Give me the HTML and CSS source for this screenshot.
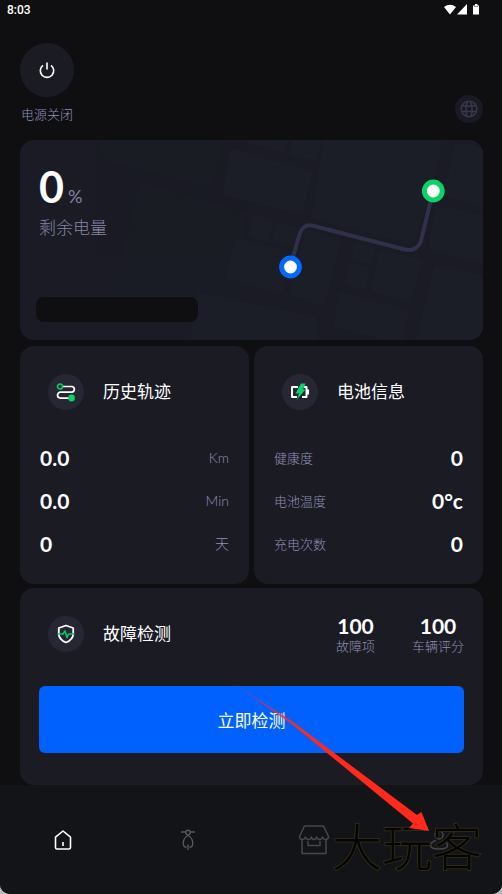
FILE: index.html
```html
<!DOCTYPE html>
<html lang="zh-CN">
<head>
<meta charset="utf-8">
<meta name="viewport" content="width=device-width, initial-scale=1">
<title>车辆首页</title>
<link rel="stylesheet" href="styles.css">
</head>
<body>
<div class="app">
  <div class="status">
    <span>8:03</span>
    <svg class="status-icons" width="38" height="12" viewBox="0 0 38 12" fill="#fff" aria-hidden="true">
      <path d="M0 3Q6-1.500 12 3L6 10.500Z"/><path d="M23 0V10.500H13Z"/><path d="M29 1.500H31V0H33.500V1.500H35V10.500H29Z"/><path d="M30 2.500H34" stroke="#777" stroke-width=".8"/>
    </svg>
  </div>

  <header class="top">
    <div class="power">
      <button class="power-btn" aria-label="电源">
        <svg width="18" height="18" viewBox="0 0 18 18" fill="none" stroke="#fff" stroke-width="1.6" aria-hidden="true"><path d="M9 1.500V8.500M5 4.300a6.700 6.700 0 1 0 8 0"/></svg>
      </button>
      <span class="label">电源关闭</span>
    </div>
    <button class="globe" aria-label="语言">
      <svg width="18" height="18" viewBox="0 0 18 18" fill="none" stroke="#38384a" stroke-width="1.5" aria-hidden="true"><circle cx="9" cy="9" r="7.800"/><path d="M7.500 1.500Q4.500 9 7 16.500M10.500 1.500Q13.500 9 11 16.500M2 5.500Q9 7 16 5.500M1.500 11.500H16.500"/></svg>
    </button>
  </header>

  <main class="cards">
    <section class="card map-card">
      <svg class="map" viewBox="0 0 463 200" preserveAspectRatio="xMaxYMid slice" aria-hidden="true">
        <g class="blocks faint">
          <path d="M122 46L224 75L200 176L98 148Z"/><path d="M90 -10L200 -10L190 44L80 16Z"/>
        </g>
        <g class="blocks">
          <path d="M180 156L294 180V210H172Z"/>
          <path d="M213 13L289 33L280 71L206 52Z"/>
          <path d="M226 -8H267L263 9L232 1Z"/>
          <path d="M277 -8H300L294 17L273 12Z"/>
          <path d="M309 -10L419 -5L417 14L392 101L295 75Z"/>
          <path d="M236 79L250 83L246 98L232 94Z"/>
          <path d="M259 86L274 90L271 102L256 98Z"/>
          <path d="M218 102L266 115L260 149L209 136Z"/>
          <path d="M288 94L318 102L302 162L272 152Z"/>
          <path d="M337 107L352 111L349 121L335 117Z"/>
          <path d="M332 127L346 130L343 146L328 141Z"/>
          <path d="M362 114L399 122L388 159L354 149Z"/>
          <path d="M322 156L385 173L378 200L317 184Z"/>
          <path d="M418 69L475 81V123L412 107Z"/>
          <path d="M437 6L475 14V66L428 54Z"/>
          <path d="M417 129L475 142V210H398Z"/>
        </g>
        <path class="route" d="M270 127L280 93Q284 83 294 86L383 109Q396 113 401 101L413 51"/>
        <circle cx="270.500" cy="127" r="8.900" fill="#fff" stroke="#0568ff" stroke-width="5"/>
        <circle cx="413.300" cy="51" r="8.900" fill="#fff" stroke="#08d467" stroke-width="5"/>
      </svg>
      <div class="charge">
        <p class="charge-value"><strong>0</strong><span>%</span></p>
        <p class="charge-label">剩余电量</p>
      </div>
      <div class="pill"></div>
    </section>

    <div class="pair">
      <section class="card info">
        <div class="head">
          <span class="badge"><svg width="22" height="22" viewBox="0 0 22 22" fill="none" stroke-width="1.700" aria-hidden="true"><path stroke="#fff" d="M7 5.500H16.500a2.800 2.800 0 0 1 0 5.600H5.500a3 3 0 0 0 0 6H14"/><circle cx="5" cy="5.500" r="2.500" stroke="#08c964"/><circle cx="16.500" cy="17" r="3.400" fill="#08d467"/></svg></span>
          <h2>历史轨迹</h2>
        </div>
        <dl class="rows value-first">
          <div><dt>Km</dt><dd>0.0</dd></div>
          <div><dt>Min</dt><dd>0.0</dd></div>
          <div><dt>天</dt><dd>0</dd></div>
        </dl>
      </section>
      <section class="card info">
        <div class="head">
          <span class="badge"><svg width="22" height="22" viewBox="0 0 22 22" fill="none" aria-hidden="true"><path stroke="#fff" stroke-width="2" stroke-linejoin="round" d="M9 6H3V16H8M13 16H17.500V6H15"/><path stroke="#fff" stroke-width="2" d="M19 8.500V13.500"/><path fill="#08d467" d="M12 2.500H16.500L14 8.500H16.500L7.500 19L10 12.500H6.500Z"/></svg></span>
          <h2>电池信息</h2>
        </div>
        <dl class="rows">
          <div><dt>健康度</dt><dd>0</dd></div>
          <div><dt>电池温度</dt><dd>0°c</dd></div>
          <div><dt>充电次数</dt><dd>0</dd></div>
        </dl>
      </section>
    </div>

    <section class="card check">
      <div class="head">
        <span class="badge"><svg width="22" height="22" viewBox="0 0 22 22" fill="none" aria-hidden="true"><path stroke="#fff" stroke-width="1.800" stroke-linejoin="round" d="M11 2.500L18.200 5V11Q18.200 16.500 11 19.500Q3.800 16.500 3.800 11V5Z"/><path stroke="#08c964" stroke-width="1.600" stroke-linejoin="round" d="M2.500 11H8L10 8L12 14.500L13.500 11H19.500"/></svg></span>
        <h2>故障检测</h2>
        <dl class="scores">
          <div><dt>故障项</dt><dd>100</dd></div>
          <div><dt>车辆评分</dt><dd>100</dd></div>
        </dl>
      </div>
      <button class="primary">立即检测</button>
    </section>
  </main>

  <nav class="tabs">
    <a href="#home" aria-label="首页"><svg width="20" height="22" viewBox="0 0 20 22" fill="none" stroke="#fff" stroke-width="1.600" stroke-linejoin="round" aria-hidden="true"><path d="M10 2L17.500 8.200V18.500Q17.500 20 16 20H4Q2.500 20 2.500 18.500V8.200ZM10 13V17"/></svg></a>
    <a href="#car" aria-label="车辆"><svg width="16" height="24" viewBox="0 0 16 24" fill="none" stroke="#55565c" stroke-width="1.400" aria-hidden="true"><circle cx="8" cy="4.500" r="2.300"/><path d="M1 4H5.700M10.300 4H15M6.500 19H5.500Q3.300 19 3.300 15Q3.300 10 8 7.500Q12.700 10 12.700 15Q12.700 19 10.500 19H9.500M8 16.500V22"/></svg></a>
    <a href="#shop" aria-label="商城"><svg width="32" height="30" viewBox="0 0 32 30" fill="none" stroke="#46474d" stroke-width="1.500" stroke-linejoin="round" aria-hidden="true"><path d="M6.500 1H25.500L30.500 11.500Q30.500 14.500 27.800 14.500Q25 14.500 24.700 12Q24 14.500 21.500 14.500Q19 14.500 18.700 12Q18 14.500 16 14.500Q14 14.500 13.300 12Q13 14.500 10.500 14.500Q8 14.500 7.300 12Q7 14.500 4.200 14.500Q1.500 14.500 1.500 11.500ZM4 15V28.500H28V15M10 16V20.500H22V16"/></svg></a>
    <a href="#me" aria-label="我的"><svg width="20" height="22" viewBox="0 0 20 22" fill="none" stroke="#46474d" stroke-width="1.500" aria-hidden="true"><circle cx="10" cy="6" r="4"/><path d="M7 11.500Q1.500 13 1.500 16.500Q1.500 20 10 20Q18.500 20 18.500 16.500Q18.500 13 13 11.500"/></svg></a>
    <span class="watermark">大玩客</span>
  </nav>

  <svg class="arrow" width="200" height="150" viewBox="0 0 200 150" aria-hidden="true">
    <defs><linearGradient id="fade" x1="0" y1="0" x2="1" y2="1"><stop offset="0" stop-color="#ff2a1c" stop-opacity=".4"/><stop offset=".3" stop-color="#ff2a1c"/></linearGradient></defs>
    <path fill="url(#fade)" d="M0 0L60 39L184 132L188.500 129L196 148L176 145L180 140.500L60 42Z"/>
  </svg>
</div>
</body>
</html>
```
FILE: styles.css
```css
* { box-sizing: border-box; }

html { background: #b9b9bc; }

body,
p,
h2,
dl,
dd { margin: 0; }

body {
  font-family: Lato, "Noto Sans CJK SC", sans-serif;
  color: #fff;
}

button {
  border: 0;
  padding: 0;
  font: inherit;
  color: inherit;
  cursor: pointer;
}

svg { display: block; }

.app {
  position: relative;
  display: flex;
  flex-direction: column;
  min-height: 100vh;
  overflow: hidden;
  background: #0f0f11;
  border-radius: 0 0 10px 10px;
}

.status {
  display: flex;
  justify-content: space-between;
  align-items: center;
  height: 20px;
  padding: 0 20px 0 7px;
  font: 500 12px/20px Roboto, sans-serif;
}

.top {
  display: flex;
  justify-content: space-between;
  align-items: flex-end;
  padding: 23px 19px 17px 20px;
}

.power {
  display: flex;
  flex-direction: column;
  align-items: center;
  gap: 8px;
}

.power-btn,
.globe,
.badge {
  display: grid;
  place-items: center;
  flex: none;
  border-radius: 50%;
  background: #1b1b24;
}

.power-btn {
  width: 54px;
  height: 54px;
}

.globe {
  width: 28px;
  height: 28px;
  background: #1a1a25;
}

.label {
  font-size: 13px;
  line-height: 18px;
  color: #8f8fb2;
  font-weight: 300;
}

.cards {
  display: flex;
  flex-direction: column;
  gap: 5px;
  padding: 0 19px 0 20px;
}

.card {
  border-radius: 14px;
  background: #1b1b24;
}

.map-card {
  position: relative;
  display: flex;
  flex-direction: column;
  justify-content: space-between;
  height: 200px;
  padding: 20px 16px 18px;
  overflow: hidden;
  background: #1a1b24;
}

.map {
  position: absolute;
  inset: 0;
  width: 100%;
  height: 100%;
}

.blocks {
  fill: #1c1e27;
  stroke: #1c1e27;
  stroke-width: 7;
  stroke-linejoin: round;
}

.faint { opacity: .4; }

.route {
  fill: none;
  stroke: #30304a;
  stroke-width: 4;
}

.charge {
  position: relative;
  padding-left: 3px;
}

.charge-value {
  display: flex;
  align-items: baseline;
  gap: 4px;
  line-height: 54px;
}

.charge-value strong { font-size: 43px; }

.charge-value span,
.charge-label {
  font-size: 17px;
  color: #8585a3;
  font-weight: 300;
}

.charge-value span {
  font-size: 18px;
  font-weight: 400;
}

.charge-label { line-height: 28px; margin-top: -9px; }

.pill {
  position: relative;
  width: 162px;
  height: 25px;
  border-radius: 8px;
  background: #0f0f11;
}

.pair {
  display: grid;
  grid-template-columns: 1fr 1fr;
  gap: 5px;
  margin-top: 1px;
}

.info { padding: 28px 20px 19px; }

.head {
  display: flex;
  align-items: center;
  padding-left: 8px;
}

.badge {
  width: 36px;
  height: 36px;
  background: #262733;
}

h2 {
  margin-left: 19px;
  font-size: 17px;
  line-height: 24px;
  font-weight: 400;
}

.rows { margin-top: 26px; }

.rows div {
  display: flex;
  justify-content: space-between;
  align-items: center;
  height: 43px;
}

.value-first div { flex-direction: row-reverse; }

dt {
  font-size: 13px;
  line-height: 16px;
  color: #8f8fb2;
  font-weight: 300;
}

.value-first dt { font-size: 14px; }

dd {
  font-size: 21px;
  line-height: 24px;
  font-weight: 700;
}

.check {
  margin-top: -1px;
  padding: 26px 19px 32px;
}

.check .head { padding-left: 9px; }

.scores {
  display: flex;
  gap: 37px;
  margin-left: auto;
}

.scores div {
  display: flex;
  flex-direction: column-reverse;
  align-items: center;
}

.primary {
  display: block;
  width: 100%;
  height: 67px;
  margin-top: 32px;
  border-radius: 6px;
  background: #0061ff;
  font-size: 17px;
}

.tabs {
  position: relative;
  flex: 1;
  display: grid;
  grid-template-columns: repeat(4, 1fr);
  min-height: 100px;
  background: #131418;
}

.tabs a {
  display: grid;
  place-items: center;
}

.watermark {
  position: absolute;
  right: 20px;
  top: 30px;
  font-size: 50px;
  font-weight: 300;
  line-height: 64px;
  color: #050505;
  -webkit-text-stroke: 2px #2c2918;
  paint-order: stroke;
  pointer-events: none;
}

.arrow {
  position: absolute;
  left: 233px;
  top: 683px;
  pointer-events: none;
}
```
